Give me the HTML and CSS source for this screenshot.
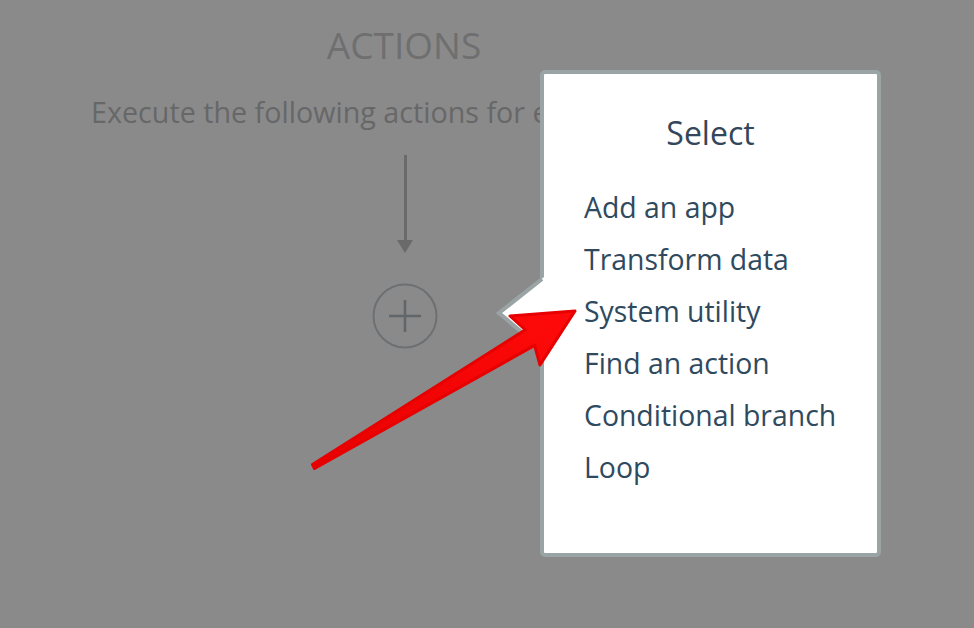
FILE: index.html
```html
<!DOCTYPE html>
<html lang="en">
<head>
<meta charset="utf-8">
<title>Actions</title>
<link rel="stylesheet" href="styles.css">
</head>
<body>
<div class="page">
  <section class="flow">
    <h1 class="flow-title">ACTIONS</h1>
    <p class="flow-sub">Execute the following actions for each iteration</p>
    <div class="connector">
      <span class="connector-line"></span>
      <span class="connector-head"></span>
    </div>
    <button class="add-btn" type="button" aria-label="Add step">
      <svg width="66" height="66" viewBox="0 0 66 66">
        <circle cx="33" cy="33" r="31.5" fill="none" stroke="#6c7073" stroke-width="2"/>
        <path d="M17 33H49M33 17V49" stroke="#626669" stroke-width="2.6" fill="none"/>
      </svg>
    </button>
  </section>

  <div class="popover">
    <svg class="popover-notch" width="54" height="76" viewBox="0 0 54 76">
      <polygon points="50,1 5,37 50,75 54,75 54,1" fill="#fff"/>
      <polyline points="48,3 5,37 48,73" fill="none" stroke="#9aa4a5" stroke-width="4" stroke-linejoin="miter"/>
    </svg>
    <h2 class="popover-title">Select</h2>
    <ul class="menu">
      <li class="menu-item">Add an app</li>
      <li class="menu-item">Transform data</li>
      <li class="menu-item">System utility</li>
      <li class="menu-item">Find an action</li>
      <li class="menu-item">Conditional branch</li>
      <li class="menu-item">Loop</li>
    </ul>
  </div>

  <svg class="annotation" width="974" height="628" viewBox="0 0 974 628">
    <defs>
      <linearGradient id="redg" x1="0" y1="1" x2="1" y2="0">
        <stop offset="0" stop-color="#e80000"/>
        <stop offset="1" stop-color="#ff0a0a"/>
      </linearGradient>
    </defs>
    <path d="M312.5 464.5 L525.4 329.8 L510 316 L575 311 L540 365 L534.6 345.4 L314.5 468.5 Z"
          fill="url(#redg)" stroke="#e60000" stroke-width="3" stroke-linejoin="round"/>
  </svg>
</div>
</body>
</html>
```

FILE: styles.css
```css
* {
  box-sizing: border-box;
}

html, body {
  margin: 0;
  padding: 0;
}

body {
  background: #8a8a8b;
  font-family: "Open Sans", "Noto Sans", sans-serif;
  width: 974px;
  height: 628px;
  overflow: hidden;
}

.page {
  position: relative;
  width: 974px;
  height: 628px;
}

.flow {
  width: 808px;
  display: flex;
  flex-direction: column;
  align-items: center;
  padding-top: 23px;
}

.flow-title {
  margin: 0;
  font-size: 37px;
  font-weight: 400;
  line-height: 1.2;
  color: #6f6f70;
}

.flow-sub {
  margin: 28px 0 0;
  font-size: 28.7px;
  line-height: 1.2;
  color: #676768;
  white-space: nowrap;
}

.connector {
  margin-top: 25px;
  display: flex;
  flex-direction: column;
  align-items: center;
  margin-left: 2px;
}

.connector-line {
  width: 3px;
  height: 85px;
  background: #6a6a6b;
}

.connector-head {
  width: 0;
  height: 0;
  border-left: 8px solid transparent;
  border-right: 8px solid transparent;
  border-top: 13px solid #6a6a6b;
}

.add-btn {
  margin-top: 30px;
  margin-left: 2px;
  padding: 0;
  border: 0;
  background: none;
  width: 66px;
  height: 66px;
  display: block;
}

.add-btn svg {
  display: block;
}

.popover {
  position: absolute;
  left: 540px;
  top: 70px;
  width: 341px;
  height: 487px;
  background: #fff;
  border: 4px solid #9aa4a5;
  border-radius: 5px;
  padding: 40px 0 0 40px;
}

.popover-notch {
  position: absolute;
  left: -50px;
  top: 202px;
  display: block;
}

.popover-title {
  margin: 0 0 29px -40px;
  text-align: center;
  font-size: 32px;
  font-weight: 400;
  line-height: 1.2;
  color: #34465a;
}

.menu {
  list-style: none;
  margin: 0;
  padding: 0;
}

.menu-item {
  font-size: 28.4px;
  line-height: 52px;
  color: #2f4a5e;
  white-space: nowrap;
}

.annotation {
  position: absolute;
  left: 0;
  top: 0;
  pointer-events: none;
}
```
